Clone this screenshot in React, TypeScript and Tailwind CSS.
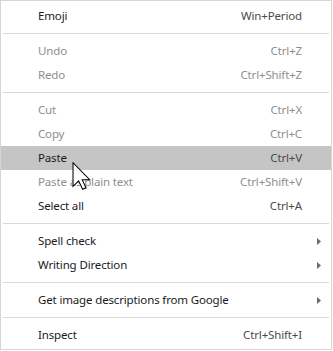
import React from "react";

type Item = {
  label: string;
  shortcut?: string;
  disabled?: boolean;
  submenu?: boolean;
  hover?: boolean;
};

const groups: Item[][] = [
  [{ label: "Emoji", shortcut: "Win+Period" }],
  [
    { label: "Undo", shortcut: "Ctrl+Z", disabled: true },
    { label: "Redo", shortcut: "Ctrl+Shift+Z", disabled: true },
  ],
  [
    { label: "Cut", shortcut: "Ctrl+X", disabled: true },
    { label: "Copy", shortcut: "Ctrl+C", disabled: true },
    { label: "Paste", shortcut: "Ctrl+V", hover: true },
    { label: "Paste as plain text", shortcut: "Ctrl+Shift+V", disabled: true },
    { label: "Select all", shortcut: "Ctrl+A" },
  ],
  [
    { label: "Spell check", submenu: true },
    { label: "Writing Direction", submenu: true },
  ],
  [{ label: "Get image descriptions from Google", submenu: true }],
  [{ label: "Inspect", shortcut: "Ctrl+Shift+I" }],
];

const Arrow = () => (
  <svg width="4" height="7" viewBox="0 0 4 7" className="block">
    <path d="M0 0 L4 3.5 L0 7 Z" fill="#6b6b6b" />
  </svg>
);

const Cursor = () => (
  <svg
    width="19"
    height="28"
    viewBox="0 0 12.5 19"
    className="absolute left-[71px] top-[161px] pointer-events-none"
  >
    <path
      d="M0.5 0.5 L0.5 16.5 L4.3 12.8 L7 18.5 L9.3 17.5 L6.7 12 L11.8 12 Z"
      fill="#fff"
      stroke="#000"
      strokeWidth="0.7"
      strokeLinejoin="miter"
    />
  </svg>
);

const Row = ({ item }: { item: Item }) => (
  <div
    className={
      "flex h-6 items-center pl-[37px] pr-[29px] " +
      (item.hover ? "bg-[#c5c5c5]" : "")
    }
  >
    <span className={item.disabled ? "flex-1 text-[#8e8e8e]" : "flex-1 text-[#1a1a1a]"}>
      {item.label}
    </span>
    {item.shortcut && (
      <span className={item.disabled ? "text-[#8e8e8e]" : "text-[#4a4a4a]"}>
        {item.shortcut}
      </span>
    )}
    {item.submenu && (
      <span className="-mr-[19px]">
        <Arrow />
      </span>
    )}
  </div>
);

export default function App() {
  return (
    <div
      className="relative w-[332px] h-[350px] border border-[#d6d6d6] bg-white py-[3px] text-[11.5px] tracking-[-0.15px]"
      style={{ fontFamily: '"Noto Sans", "Open Sans", sans-serif' }}
    >
      {groups.map((g, gi) => (
        <div key={gi}>
          {gi > 0 && <div className="mx-[2px] my-[5px] h-px bg-[#d9d9d9]" />}
          {g.map((it) => (
            <Row key={it.label} item={it} />
          ))}
        </div>
      ))}
      <Cursor />
    </div>
  );
}
